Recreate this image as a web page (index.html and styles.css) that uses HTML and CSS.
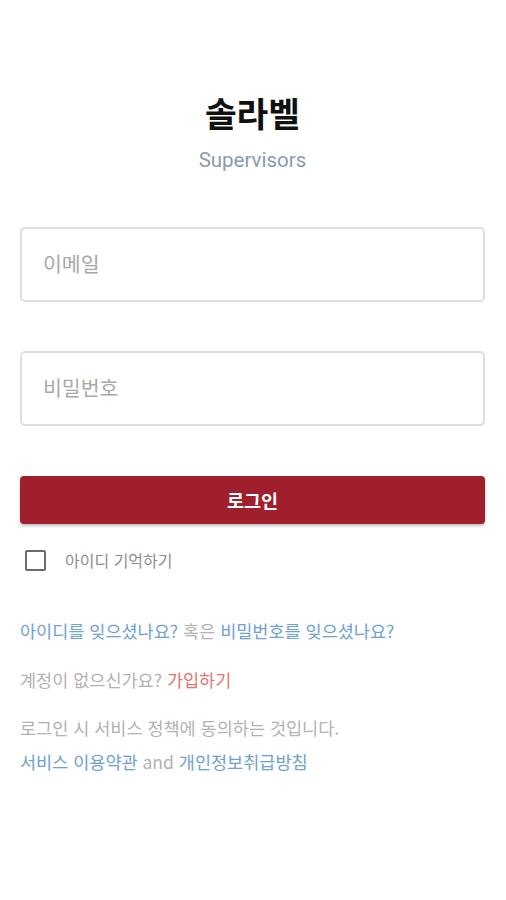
FILE: index.html
```html
<!DOCTYPE html>
<html lang="ko">
<head>
<meta charset="utf-8">
<link rel="stylesheet" href="styles.css">
</head>
<body>
<main class="page">
  <header class="brand">
    <h1 class="title">솔라벨</h1>
    <p class="subtitle">Supervisors</p>
  </header>
  <form class="form">
    <div class="field"><input class="input" type="text" placeholder="이메일"></div>
    <div class="field"><input class="input" type="password" placeholder="비밀번호"></div>
    <button class="btn" type="button">로그인</button>
    <label class="remember"><span class="box"></span><span class="remember-text">아이디 기억하기</span></label>
  </form>
  <div class="links">
    <p class="line"><a class="link">아이디를 잊으셨나요?</a> <span class="muted">혹은</span> <a class="link">비밀번호를 잊으셨나요?</a></p>
    <p class="line gap"><span class="muted">계정이 없으신가요?</span> <a class="signup">가입하기</a></p>
    <p class="line gap2"><span class="muted">로그인 시 서비스 정책에 동의하는 것입니다.</span></p>
    <p class="line tight"><a class="link">서비스 이용약관</a> <span class="muted">and</span> <a class="link">개인정보취급방침</a></p>
  </div>
</main>
</body>
</html>
```
FILE: styles.css
```css
* { box-sizing: border-box; }
html, body { margin: 0; padding: 0; background: #fff; }
body { font-family: Roboto, "Noto Sans CJK KR", sans-serif; }
.page { padding: 93px 21px 0 20px; display: flex; flex-direction: column; }
.brand { display: flex; flex-direction: column; align-items: center; }
.title { margin: 0; font-size: 34.5px; font-weight: 700; line-height: 44px; color: #111; }
.subtitle { margin: 10px 0 0; font-size: 20.5px; line-height: 26px; color: #8a9ab0; }
.form { display: flex; flex-direction: column; margin-top: 54px; }
.field { margin-bottom: 49px; }
.field + .field { margin-bottom: 50px; }
.input { display: block; width: 100%; height: 75px; border: 2px solid #dedede; border-radius: 5px; padding: 0 21px; font-size: 20.5px; font-family: Roboto, "Noto Sans CJK KR", sans-serif; color: #333; outline: none; background: #fff; }
.input::placeholder { color: #a8a8a8; }
.btn { height: 48px; border: none; border-radius: 4px; background: #a01f2d; color: #fff; font-size: 18.5px; font-weight: 700; font-family: "Noto Sans CJK KR", sans-serif; box-shadow: 0 2px 3px rgba(0,0,0,0.25); }
.remember { display: flex; align-items: center; height: 24px; margin-top: 24px; padding-left: 5px; }
.box { width: 21px; height: 21px; border: 2px solid #6a6a6a; border-radius: 2px; }
.remember-text { margin-left: 19px; font-size: 16px; color: #8e8e8e; font-family: "Noto Sans CJK KR", sans-serif; }
.links { margin-top: 47px; font-family: "Noto Sans CJK KR", sans-serif; font-size: 17.5px; }
.line { margin: 0; line-height: 24px; white-space: nowrap; }
.gap { margin-top: 25px; }
.gap2 { margin-top: 24px; }
.tight { margin-top: 10px; }
.link { color: #6ea2d1; }
.muted { color: #b2b2b2; }
.signup { color: #e27373; }
```
